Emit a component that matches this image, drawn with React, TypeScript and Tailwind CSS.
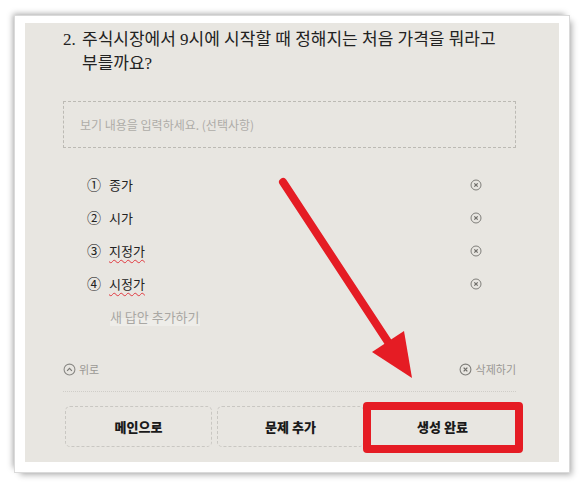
import { useState } from "react";

function CloseDot({ className = "" }: { className?: string }) {
  return (
    <svg viewBox="0 0 12 12" className={className} fill="none">
      <circle cx="6" cy="6" r="5" stroke="#7f7e7a" strokeWidth="1" />
      <path d="M4.3 4.3 7.7 7.7M7.7 4.3 4.3 7.7" stroke="#6f6e6a" strokeWidth="1.2" />
    </svg>
  );
}

function UpDot({ className = "" }: { className?: string }) {
  return (
    <svg viewBox="0 0 12 12" className={className} fill="none">
      <circle cx="6" cy="6" r="5" stroke="#8a8985" strokeWidth="1" />
      <path d="M3.8 7.2 6 5 8.2 7.2" stroke="#7a7975" strokeWidth="1.1" />
    </svg>
  );
}

export default function App() {
  const [answers] = useState([
    { no: "①", label: "종가", typo: false },
    { no: "②", label: "시가", typo: false },
    { no: "③", label: "지정가", typo: true },
    { no: "④", label: "시정가", typo: true },
  ]);

  const buttons = ["메인으로", "문제 추가", "생성 완료"];

  return (
    <div className="relative w-[584px] h-[488px] bg-white pt-[15px] pl-[14px] font-['Noto_Sans_CJK_KR',sans-serif]">
      <div className="w-[556px] h-[458px] bg-white border border-[#dadada] pt-[7px] pl-[10px] pr-[10px] pb-[10px] shadow-[-3px_-3px_6px_-2px_rgba(0,0,0,0.35),4px_4px_6px_-2px_rgba(0,0,0,0.3)]">
        <div className="h-full bg-[#e8e6e1] pl-[38px] pr-[43px] pt-[5px] flex flex-col">
          {/* question */}
          <div className="flex text-[17px] leading-[24px] text-[#222] font-['Liberation_Serif','Noto_Sans_CJK_KR',serif]">
            <span className="w-[19px] shrink-0">2.</span>
            <p className="break-keep">주식시장에서 9시에 시작할 때 정해지는 처음 가격을 뭐라고 부를까요?</p>
          </div>

          {/* example input */}
          <div className="mt-[25px] h-[47px] border border-dashed border-[#bcbab4] flex items-center pl-[16px] text-[12px] text-[#aeaca8]">
            보기 내용을 입력하세요. (선택사항)
          </div>

          {/* answers */}
          <div className="mt-[20px] flex flex-col">
            {answers.map((a) => (
              <div key={a.no} className="h-[33px] flex items-center justify-between pl-[24px] pr-[34px]">
                <div className="flex items-center text-[13px] text-[#222]">
                  <span className="w-[14px] text-[14px]">{a.no}</span>
                  <span
                    className={
                      a.typo
                        ? "ml-[8px] underline decoration-wavy decoration-[#e0383f] decoration-1 underline-offset-[3px]"
                        : "ml-[8px]"
                    }
                  >
                    {a.label}
                  </span>
                </div>
                <CloseDot className="w-[12px] h-[12px]" />
              </div>
            ))}
            <div className="h-[33px] flex items-center pl-[47px]">
              <span className="text-[13px] text-[#a9a7a3] bg-[linear-gradient(transparent_60%,#eeede9_60%)]">
                새 답안 추가하기
              </span>
            </div>
          </div>

          {/* move / delete */}
          <div className="mt-[26px] h-[20px] flex items-center justify-between text-[11px] text-[#9a9894]">
            <div className="flex items-center gap-[3px]">
              <UpDot className="w-[13px] h-[13px]" />
              <span>위로</span>
            </div>
            <div className="flex items-center gap-[4px]">
              <CloseDot className="w-[13px] h-[13px]" />
              <span>삭제하기</span>
            </div>
          </div>

          <div className="mt-[12px] border-t border-dotted border-[#cfcdc8]" />

          {/* bottom buttons */}
          <div className="mt-[14px] pl-[2px] grid grid-cols-3 gap-[5px]">
            {buttons.map((b) => (
              <div
                key={b}
                className="h-[41px] rounded-[5px] border border-dashed border-[#c9c7c2] flex items-center justify-center text-[13px] font-black text-[#1a1a1a]"
              >
                {b}
              </div>
            ))}
          </div>
        </div>
      </div>

      {/* red highlight box */}
      <div className="absolute left-[363px] top-[402px] w-[160px] h-[51px] border-[8px] border-[#e51c24] rounded-[4px]" />

      {/* red arrow */}
      <svg className="absolute left-0 top-0 pointer-events-none" width="584" height="488" viewBox="0 0 584 488">
        <line x1="283" y1="182" x2="390" y2="345" stroke="#e51c24" strokeWidth="8" strokeLinecap="round" />
        <polygon points="412,378 372,352 404,331" fill="#e51c24" />
      </svg>
    </div>
  );
}
